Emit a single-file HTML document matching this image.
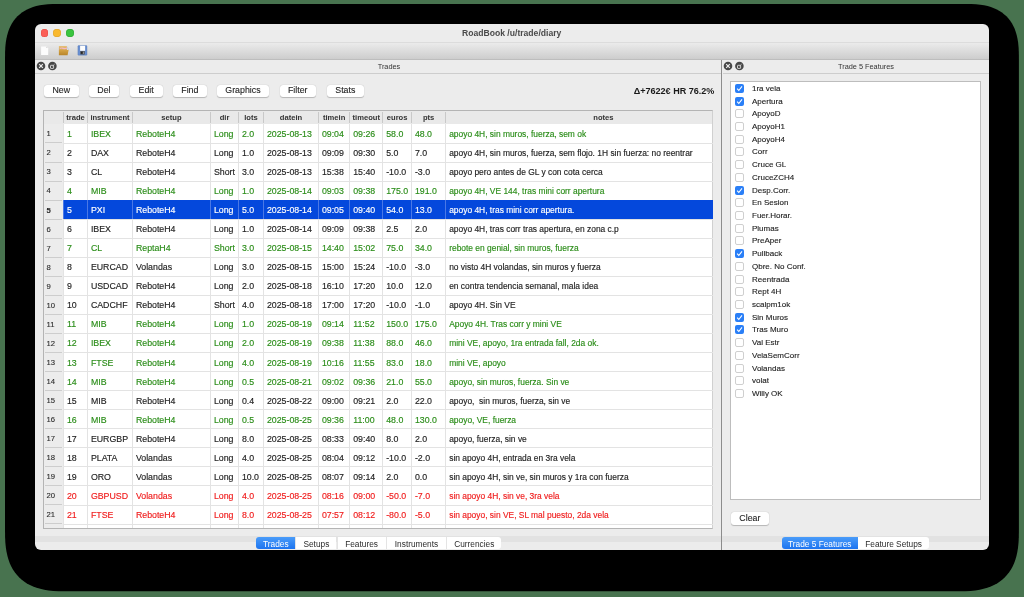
<!DOCTYPE html><html><head><meta charset="utf-8"><style>
*{margin:0;padding:0;box-sizing:border-box}
html,body{width:1024px;height:597px;overflow:hidden;background:#48734f;font-family:"Liberation Sans",sans-serif;}
.a{position:absolute}
#shadow{left:5px;top:4px;width:1014px;height:588.5px;background:#000;border-radius:40px}
#win{left:35px;top:24px;width:954px;height:525.7px;background:#ececec;border-radius:6px;overflow:hidden}
.t{position:absolute;white-space:nowrap;line-height:1}
.cell{font-size:8.8px;-webkit-text-stroke:0.15px currentColor}
.nt{font-size:8.42px}
.hd{font-size:7.6px;font-weight:bold;color:#333}
.vl{position:absolute;width:1px}
.btn{position:absolute;background:#fff;border-radius:3px;box-shadow:0 0.6px 0.9px rgba(0,0,0,.22),0 0 0 0.3px rgba(0,0,0,.06);font-size:8.8px;color:#222;text-align:center;line-height:11.9px;height:12.2px;-webkit-text-stroke:0.1px currentColor}
.cb{position:absolute;width:9px;height:9px;border-radius:2px}
.cb0{background:#fff;border:0.7px solid #cfcfcf}
.cb1{background:#2a7ff7}
.ft{font-size:8px;color:#222;-webkit-text-stroke:0.12px currentColor}
.tab{position:absolute;height:12.5px;line-height:14.4px;font-size:8.3px;text-align:center;color:#2a2a2a;background:#fff}
</style></head><body><div style="position:absolute;left:0;top:0;width:1024px;height:597px;will-change:transform">
<svg class="a" style="left:0;top:0" width="1024" height="597"><path d="M5.00 58.90 L5.09 51.60 L5.35 46.73 L5.78 42.51 L6.39 38.69 L7.18 35.17 L8.13 31.90 L9.26 28.84 L10.56 25.99 L12.03 23.31 L13.67 20.82 L15.48 18.50 L17.45 16.35 L19.60 14.38 L21.92 12.57 L24.41 10.93 L27.09 9.46 L29.94 8.16 L33.00 7.03 L36.27 6.08 L39.79 5.29 L43.61 4.68 L47.83 4.25 L52.70 3.99 L60.00 3.90 L963.90 3.90 L971.20 3.99 L976.07 4.25 L980.29 4.68 L984.11 5.29 L987.63 6.08 L990.90 7.03 L993.96 8.16 L996.81 9.46 L999.49 10.93 L1001.98 12.57 L1004.30 14.38 L1006.45 16.35 L1008.42 18.50 L1010.23 20.82 L1011.87 23.31 L1013.34 25.99 L1014.64 28.84 L1015.77 31.90 L1016.72 35.17 L1017.51 38.69 L1018.12 42.51 L1018.55 46.73 L1018.81 51.60 L1018.90 58.90 L1018.90 529.30 L1018.80 537.52 L1018.51 543.02 L1018.02 547.78 L1017.33 552.08 L1016.45 556.05 L1015.37 559.74 L1014.10 563.18 L1012.63 566.40 L1010.98 569.42 L1009.13 572.23 L1007.09 574.84 L1004.86 577.26 L1002.44 579.49 L999.83 581.53 L997.02 583.38 L994.00 585.03 L990.78 586.50 L987.34 587.77 L983.65 588.85 L979.68 589.73 L975.38 590.42 L970.62 590.91 L965.12 591.20 L956.90 591.30 L67.00 591.30 L58.78 591.20 L53.28 590.91 L48.52 590.42 L44.22 589.73 L40.25 588.85 L36.56 587.77 L33.12 586.50 L29.90 585.03 L26.88 583.38 L24.07 581.53 L21.46 579.49 L19.04 577.26 L16.81 574.84 L14.77 572.23 L12.92 569.42 L11.27 566.40 L9.80 563.18 L8.53 559.74 L7.45 556.05 L6.57 552.08 L5.88 547.78 L5.39 543.02 L5.10 537.52 L5.00 529.30 Z" fill="#000"/></svg>

<div id="win" class="a"></div>
<div class="a" style="left:35px;top:42px;width:954px;height:0.6px;background:#dcdcdc"></div>
<div class="a" style="left:40.5px;top:29.0px;width:7.8px;height:7.8px;border-radius:50%;background:#fb5f57;box-shadow:inset 0 0 0 0.4px #e2463f"></div>
<div class="a" style="left:53.2px;top:29.0px;width:7.8px;height:7.8px;border-radius:50%;background:#f9b92e;box-shadow:inset 0 0 0 0.4px #d9a02a"></div>
<div class="a" style="left:66.0px;top:29.0px;width:7.8px;height:7.8px;border-radius:50%;background:#3ac43f;box-shadow:inset 0 0 0 0.4px #2aa42f"></div>
<div class="t" style="left:462px;top:28.5px;width:99px;text-align:center;font-size:8.6px;font-weight:bold;color:#4a4a4a">RoadBook /u/trade/diary</div>
<div class="a" style="left:35px;top:42.6px;width:954px;height:17px;background:linear-gradient(#ebebeb,#cbcbcb)"></div>
<div class="a" style="left:35px;top:59.4px;width:954px;height:0.6px;background:#bdbdbd"></div>
<svg class="a" style="left:40px;top:45px" width="50" height="12" viewBox="0 0 50 12">
<defs><linearGradient id="fb" x1="0" y1="0" x2="0" y2="1"><stop offset="0" stop-color="#e6c07a"/><stop offset="1" stop-color="#d1a552"/></linearGradient>
<linearGradient id="ff" x1="0" y1="0" x2="0" y2="1"><stop offset="0" stop-color="#d6a445"/><stop offset="1" stop-color="#b8852a"/></linearGradient></defs>
<path d="M1.1 1.4 H6.2 L8.2 3.4 V10.1 H1.1 Z" fill="#fcfcfc"/>
<circle cx="6.6" cy="2.6" r="0.5" fill="#d4d4d4"/>
<path d="M18.9 1.0 H26.9 V5.4 H18.9 Z" fill="url(#fb)"/>
<path d="M19.8 3.0 Q22 2.1 23.5 2.8 T27 2.4 V3.8 Q25 4.6 23 3.9 T19.8 4.2 Z" fill="#f2b7c4"/>
<path d="M18.9 5.0 H28.6 L27.6 10.2 H18.9 Z" fill="url(#ff)"/>
<path d="M27.2 1.6 L28.6 5.0" stroke="#9fb4d4" stroke-width="0.4"/>
<rect x="37.9" y="0.6" width="9.1" height="9.6" rx="0.6" fill="#6a8fd0"/>
<rect x="37.9" y="0.6" width="9.1" height="9.6" rx="0.6" fill="none" stroke="#4f73b4" stroke-width="0.35"/>
<rect x="40.1" y="0.8" width="5" height="5" fill="#fdfdfd"/>
<rect x="40.3" y="6.1" width="4.4" height="3.4" fill="#4a4a4a"/>
<circle cx="41.8" cy="7.8" r="0.9" fill="#1e1e1e"/>
<rect x="42.9" y="6.6" width="1.2" height="2.4" fill="#8a8a8a"/>
</svg>
<div class="a" style="left:35px;top:73px;width:686.5px;height:0.7px;background:#cdcdcd"></div>
<div class="a" style="left:722.5px;top:73px;width:266.5px;height:0.7px;background:#cdcdcd"></div>
<div class="a" style="left:721.1px;top:59.6px;width:1px;height:490px;background:#8c8c8c"></div>
<svg class="a" style="left:36.3px;top:61.099999999999994px" width="25" height="10" viewBox="0 0 25 10">
<circle cx="5" cy="5" r="4.3" fill="#474747"/>
<path d="M3.2 3.2 L6.8 6.8 M6.8 3.2 L3.2 6.8" stroke="#ededed" stroke-width="1.2"/>
<circle cx="16.4" cy="5" r="4.3" fill="#474747"/>
<rect x="14.5" y="4.3" width="3.1" height="3.1" rx="0.4" fill="none" stroke="#e4e4e4" stroke-width="0.85"/>
<path d="M16.6 5.1 L18.6 3.2" stroke="#e4e4e4" stroke-width="0.7"/>
</svg>
<svg class="a" style="left:722.9px;top:61.099999999999994px" width="25" height="10" viewBox="0 0 25 10">
<circle cx="5" cy="5" r="4.3" fill="#474747"/>
<path d="M3.2 3.2 L6.8 6.8 M6.8 3.2 L3.2 6.8" stroke="#ededed" stroke-width="1.2"/>
<circle cx="16.4" cy="5" r="4.3" fill="#474747"/>
<rect x="14.5" y="4.3" width="3.1" height="3.1" rx="0.4" fill="none" stroke="#e4e4e4" stroke-width="0.85"/>
<path d="M16.6 5.1 L18.6 3.2" stroke="#e4e4e4" stroke-width="0.7"/>
</svg>
<div class="t" style="left:359px;top:63.0px;width:60px;text-align:center;font-size:7.35px;color:#333">Trades</div>
<div class="t" style="left:826px;top:63.0px;width:80px;text-align:center;font-size:7.35px;color:#333">Trade 5 Features</div>
<div class="btn" style="left:43.8px;top:84.8px;width:34.8px">New</div>
<div class="btn" style="left:88.7px;top:84.8px;width:30.5px">Del</div>
<div class="btn" style="left:129.8px;top:84.8px;width:32.79999999999998px">Edit</div>
<div class="btn" style="left:172.7px;top:84.8px;width:34.30000000000001px">Find</div>
<div class="btn" style="left:217px;top:84.8px;width:51.89999999999998px">Graphics</div>
<div class="btn" style="left:279.6px;top:84.8px;width:36.39999999999998px">Filter</div>
<div class="btn" style="left:326.6px;top:84.8px;width:37.39999999999998px">Stats</div>
<div class="t" style="left:601.6px;top:86.8px;width:112.8px;text-align:right;font-size:9.05px;font-weight:bold;color:#1a1a1a">&Delta;+7622&euro; HR 76.2%</div>
<div class="a" style="left:43px;top:110.2px;width:670.3px;height:418.6px;background:#fff;border:0.8px solid #b4b4b4;border-right-color:#d0d0d0"></div>
<div class="a" style="left:43.8px;top:111px;width:668.7px;height:13.400000000000006px;background:#e9e9e9"></div>
<div class="a" style="left:43.8px;top:123.9px;width:19.700000000000003px;height:404.1px;background:#ececec"></div>
<div class="vl" style="left:63.0px;top:112.2px;height:10.6px;background:#c9c9c9"></div>
<div class="vl" style="left:63.0px;top:123.9px;height:404.1px;background:#e3e3e3"></div>
<div class="vl" style="left:87.0px;top:112.2px;height:10.6px;background:#c9c9c9"></div>
<div class="vl" style="left:87.0px;top:123.9px;height:404.1px;background:#e3e3e3"></div>
<div class="vl" style="left:132.0px;top:112.2px;height:10.6px;background:#c9c9c9"></div>
<div class="vl" style="left:132.0px;top:123.9px;height:404.1px;background:#e3e3e3"></div>
<div class="vl" style="left:210.0px;top:112.2px;height:10.6px;background:#c9c9c9"></div>
<div class="vl" style="left:210.0px;top:123.9px;height:404.1px;background:#e3e3e3"></div>
<div class="vl" style="left:238.0px;top:112.2px;height:10.6px;background:#c9c9c9"></div>
<div class="vl" style="left:238.0px;top:123.9px;height:404.1px;background:#e3e3e3"></div>
<div class="vl" style="left:263.0px;top:112.2px;height:10.6px;background:#c9c9c9"></div>
<div class="vl" style="left:263.0px;top:123.9px;height:404.1px;background:#e3e3e3"></div>
<div class="vl" style="left:318.0px;top:112.2px;height:10.6px;background:#c9c9c9"></div>
<div class="vl" style="left:318.0px;top:123.9px;height:404.1px;background:#e3e3e3"></div>
<div class="vl" style="left:349.3px;top:112.2px;height:10.6px;background:#c9c9c9"></div>
<div class="vl" style="left:349.3px;top:123.9px;height:404.1px;background:#e3e3e3"></div>
<div class="vl" style="left:382.3px;top:112.2px;height:10.6px;background:#c9c9c9"></div>
<div class="vl" style="left:382.3px;top:123.9px;height:404.1px;background:#e3e3e3"></div>
<div class="vl" style="left:411.0px;top:112.2px;height:10.6px;background:#c9c9c9"></div>
<div class="vl" style="left:411.0px;top:123.9px;height:404.1px;background:#e3e3e3"></div>
<div class="vl" style="left:445.3px;top:112.2px;height:10.6px;background:#c9c9c9"></div>
<div class="vl" style="left:445.3px;top:123.9px;height:404.1px;background:#e3e3e3"></div>
<div class="vl" style="left:63px;top:112.2px;height:10.6px;background:#c9c9c9"></div>
<div class="t hd" style="left:63.5px;top:113.6px;width:24.0px;text-align:center">trade</div>
<div class="t hd" style="left:87.5px;top:113.6px;width:45.0px;text-align:center">instrument</div>
<div class="t hd" style="left:132.5px;top:113.6px;width:78.0px;text-align:center">setup</div>
<div class="t hd" style="left:210.5px;top:113.6px;width:28.0px;text-align:center">dir</div>
<div class="t hd" style="left:238.5px;top:113.6px;width:25.0px;text-align:center">lots</div>
<div class="t hd" style="left:263.5px;top:113.6px;width:55.0px;text-align:center">datein</div>
<div class="t hd" style="left:318.5px;top:113.6px;width:31.30000000000001px;text-align:center">timein</div>
<div class="t hd" style="left:349.8px;top:113.6px;width:33.0px;text-align:center">timeout</div>
<div class="t hd" style="left:382.8px;top:113.6px;width:28.69999999999999px;text-align:center">euros</div>
<div class="t hd" style="left:411.5px;top:113.6px;width:34.30000000000001px;text-align:center">pts</div>
<div class="t hd" style="left:445.8px;top:113.6px;width:315.2px;text-align:center">notes</div>
<div class="a" style="left:63.5px;top:142.55px;width:649px;height:0.8px;background:#e3e3e3"></div>
<div class="a" style="left:45.2px;top:142.45000000000002px;width:17px;height:0.9px;background:#cdcdcd"></div>
<div class="t" style="left:46.6px;top:130.3px;font-size:7.7px;-webkit-text-stroke:0.1px currentColor;color:#2a2a2a;font-weight:normal">1</div>
<div class="t cell" style="left:66.9px;top:129.9px;color:#2b8d19">1</div>
<div class="t cell" style="left:90.9px;top:129.9px;color:#2b8d19">IBEX</div>
<div class="t cell" style="left:135.9px;top:129.9px;color:#2b8d19">ReboteH4</div>
<div class="t cell" style="left:213.9px;top:129.9px;color:#2b8d19">Long</div>
<div class="t cell" style="left:241.9px;top:129.9px;color:#2b8d19">2.0</div>
<div class="t cell" style="left:266.9px;top:129.9px;color:#2b8d19">2025-08-13</div>
<div class="t cell" style="left:321.9px;top:129.9px;color:#2b8d19">09:04</div>
<div class="t cell" style="left:353.2px;top:129.9px;color:#2b8d19">09:26</div>
<div class="t cell" style="left:386.2px;top:129.9px;color:#2b8d19">58.0</div>
<div class="t cell" style="left:414.9px;top:129.9px;color:#2b8d19">48.0</div>
<div class="t cell nt" style="left:449.2px;top:129.9px;color:#2b8d19">apoyo 4H, sin muros, fuerza, sem ok</div>
<div class="a" style="left:63.5px;top:161.60000000000002px;width:649px;height:0.8px;background:#e3e3e3"></div>
<div class="a" style="left:45.2px;top:161.50000000000003px;width:17px;height:0.9px;background:#cdcdcd"></div>
<div class="t" style="left:46.6px;top:149.35000000000002px;font-size:7.7px;-webkit-text-stroke:0.1px currentColor;color:#2a2a2a;font-weight:normal">2</div>
<div class="t cell" style="left:66.9px;top:148.95000000000002px;color:#1e1e1e">2</div>
<div class="t cell" style="left:90.9px;top:148.95000000000002px;color:#1e1e1e">DAX</div>
<div class="t cell" style="left:135.9px;top:148.95000000000002px;color:#1e1e1e">ReboteH4</div>
<div class="t cell" style="left:213.9px;top:148.95000000000002px;color:#1e1e1e">Long</div>
<div class="t cell" style="left:241.9px;top:148.95000000000002px;color:#1e1e1e">1.0</div>
<div class="t cell" style="left:266.9px;top:148.95000000000002px;color:#1e1e1e">2025-08-13</div>
<div class="t cell" style="left:321.9px;top:148.95000000000002px;color:#1e1e1e">09:09</div>
<div class="t cell" style="left:353.2px;top:148.95000000000002px;color:#1e1e1e">09:30</div>
<div class="t cell" style="left:386.2px;top:148.95000000000002px;color:#1e1e1e">5.0</div>
<div class="t cell" style="left:414.9px;top:148.95000000000002px;color:#1e1e1e">7.0</div>
<div class="t cell nt" style="left:449.2px;top:148.95000000000002px;color:#1e1e1e">apoyo 4H, sin muros, fuerza, sem flojo. 1H sin fuerza: no reentrar</div>
<div class="a" style="left:63.5px;top:180.65px;width:649px;height:0.8px;background:#e3e3e3"></div>
<div class="a" style="left:45.2px;top:180.55px;width:17px;height:0.9px;background:#cdcdcd"></div>
<div class="t" style="left:46.6px;top:168.4px;font-size:7.7px;-webkit-text-stroke:0.1px currentColor;color:#2a2a2a;font-weight:normal">3</div>
<div class="t cell" style="left:66.9px;top:168.0px;color:#1e1e1e">3</div>
<div class="t cell" style="left:90.9px;top:168.0px;color:#1e1e1e">CL</div>
<div class="t cell" style="left:135.9px;top:168.0px;color:#1e1e1e">ReboteH4</div>
<div class="t cell" style="left:213.9px;top:168.0px;color:#1e1e1e">Short</div>
<div class="t cell" style="left:241.9px;top:168.0px;color:#1e1e1e">3.0</div>
<div class="t cell" style="left:266.9px;top:168.0px;color:#1e1e1e">2025-08-13</div>
<div class="t cell" style="left:321.9px;top:168.0px;color:#1e1e1e">15:38</div>
<div class="t cell" style="left:353.2px;top:168.0px;color:#1e1e1e">15:40</div>
<div class="t cell" style="left:386.2px;top:168.0px;color:#1e1e1e">-10.0</div>
<div class="t cell" style="left:414.9px;top:168.0px;color:#1e1e1e">-3.0</div>
<div class="t cell nt" style="left:449.2px;top:168.0px;color:#1e1e1e">apoyo pero antes de GL y con cota cerca</div>
<div class="a" style="left:63.5px;top:199.70000000000002px;width:649px;height:0.8px;background:#e3e3e3"></div>
<div class="a" style="left:45.2px;top:199.60000000000002px;width:17px;height:0.9px;background:#cdcdcd"></div>
<div class="t" style="left:46.6px;top:187.45000000000002px;font-size:7.7px;-webkit-text-stroke:0.1px currentColor;color:#2a2a2a;font-weight:normal">4</div>
<div class="t cell" style="left:66.9px;top:187.05px;color:#2b8d19">4</div>
<div class="t cell" style="left:90.9px;top:187.05px;color:#2b8d19">MIB</div>
<div class="t cell" style="left:135.9px;top:187.05px;color:#2b8d19">ReboteH4</div>
<div class="t cell" style="left:213.9px;top:187.05px;color:#2b8d19">Long</div>
<div class="t cell" style="left:241.9px;top:187.05px;color:#2b8d19">1.0</div>
<div class="t cell" style="left:266.9px;top:187.05px;color:#2b8d19">2025-08-14</div>
<div class="t cell" style="left:321.9px;top:187.05px;color:#2b8d19">09:03</div>
<div class="t cell" style="left:353.2px;top:187.05px;color:#2b8d19">09:38</div>
<div class="t cell" style="left:386.2px;top:187.05px;color:#2b8d19">175.0</div>
<div class="t cell" style="left:414.9px;top:187.05px;color:#2b8d19">191.0</div>
<div class="t cell nt" style="left:449.2px;top:187.05px;color:#2b8d19">apoyo 4H, VE 144, tras mini corr apertura</div>
<div class="a" style="left:63.5px;top:200.10000000000002px;width:649px;height:19.05px;background:#0448dc"></div>
<div class="vl" style="left:63.0px;top:200.10000000000002px;height:19.05px;background:#4a78e6"></div>
<div class="vl" style="left:87.0px;top:200.10000000000002px;height:19.05px;background:#4a78e6"></div>
<div class="vl" style="left:132.0px;top:200.10000000000002px;height:19.05px;background:#4a78e6"></div>
<div class="vl" style="left:210.0px;top:200.10000000000002px;height:19.05px;background:#4a78e6"></div>
<div class="vl" style="left:238.0px;top:200.10000000000002px;height:19.05px;background:#4a78e6"></div>
<div class="vl" style="left:263.0px;top:200.10000000000002px;height:19.05px;background:#4a78e6"></div>
<div class="vl" style="left:318.0px;top:200.10000000000002px;height:19.05px;background:#4a78e6"></div>
<div class="vl" style="left:349.3px;top:200.10000000000002px;height:19.05px;background:#4a78e6"></div>
<div class="vl" style="left:382.3px;top:200.10000000000002px;height:19.05px;background:#4a78e6"></div>
<div class="vl" style="left:411.0px;top:200.10000000000002px;height:19.05px;background:#4a78e6"></div>
<div class="vl" style="left:445.3px;top:200.10000000000002px;height:19.05px;background:#4a78e6"></div>
<div class="a" style="left:63.5px;top:218.75000000000003px;width:649px;height:0.8px;background:#e3e3e3"></div>
<div class="a" style="left:45.2px;top:218.65000000000003px;width:17px;height:0.9px;background:#cdcdcd"></div>
<div class="t" style="left:46.6px;top:206.50000000000003px;font-size:7.7px;-webkit-text-stroke:0.1px currentColor;color:#2a2a2a;font-weight:bold">5</div>
<div class="t cell" style="left:66.9px;top:206.10000000000002px;color:#fff">5</div>
<div class="t cell" style="left:90.9px;top:206.10000000000002px;color:#fff">PXI</div>
<div class="t cell" style="left:135.9px;top:206.10000000000002px;color:#fff">ReboteH4</div>
<div class="t cell" style="left:213.9px;top:206.10000000000002px;color:#fff">Long</div>
<div class="t cell" style="left:241.9px;top:206.10000000000002px;color:#fff">5.0</div>
<div class="t cell" style="left:266.9px;top:206.10000000000002px;color:#fff">2025-08-14</div>
<div class="t cell" style="left:321.9px;top:206.10000000000002px;color:#fff">09:05</div>
<div class="t cell" style="left:353.2px;top:206.10000000000002px;color:#fff">09:40</div>
<div class="t cell" style="left:386.2px;top:206.10000000000002px;color:#fff">54.0</div>
<div class="t cell" style="left:414.9px;top:206.10000000000002px;color:#fff">13.0</div>
<div class="t cell nt" style="left:449.2px;top:206.10000000000002px;color:#fff">apoyo 4H, tras mini corr apertura.</div>
<div class="a" style="left:63.5px;top:237.8px;width:649px;height:0.8px;background:#e3e3e3"></div>
<div class="a" style="left:45.2px;top:237.70000000000002px;width:17px;height:0.9px;background:#cdcdcd"></div>
<div class="t" style="left:46.6px;top:225.55px;font-size:7.7px;-webkit-text-stroke:0.1px currentColor;color:#2a2a2a;font-weight:normal">6</div>
<div class="t cell" style="left:66.9px;top:225.15px;color:#1e1e1e">6</div>
<div class="t cell" style="left:90.9px;top:225.15px;color:#1e1e1e">IBEX</div>
<div class="t cell" style="left:135.9px;top:225.15px;color:#1e1e1e">ReboteH4</div>
<div class="t cell" style="left:213.9px;top:225.15px;color:#1e1e1e">Long</div>
<div class="t cell" style="left:241.9px;top:225.15px;color:#1e1e1e">1.0</div>
<div class="t cell" style="left:266.9px;top:225.15px;color:#1e1e1e">2025-08-14</div>
<div class="t cell" style="left:321.9px;top:225.15px;color:#1e1e1e">09:09</div>
<div class="t cell" style="left:353.2px;top:225.15px;color:#1e1e1e">09:38</div>
<div class="t cell" style="left:386.2px;top:225.15px;color:#1e1e1e">2.5</div>
<div class="t cell" style="left:414.9px;top:225.15px;color:#1e1e1e">2.0</div>
<div class="t cell nt" style="left:449.2px;top:225.15px;color:#1e1e1e">apoyo 4H, tras corr tras apertura, en zona c.p</div>
<div class="a" style="left:63.5px;top:256.85px;width:649px;height:0.8px;background:#e3e3e3"></div>
<div class="a" style="left:45.2px;top:256.75px;width:17px;height:0.9px;background:#cdcdcd"></div>
<div class="t" style="left:46.6px;top:244.60000000000002px;font-size:7.7px;-webkit-text-stroke:0.1px currentColor;color:#2a2a2a;font-weight:normal">7</div>
<div class="t cell" style="left:66.9px;top:244.20000000000002px;color:#2b8d19">7</div>
<div class="t cell" style="left:90.9px;top:244.20000000000002px;color:#2b8d19">CL</div>
<div class="t cell" style="left:135.9px;top:244.20000000000002px;color:#2b8d19">ReptaH4</div>
<div class="t cell" style="left:213.9px;top:244.20000000000002px;color:#2b8d19">Short</div>
<div class="t cell" style="left:241.9px;top:244.20000000000002px;color:#2b8d19">3.0</div>
<div class="t cell" style="left:266.9px;top:244.20000000000002px;color:#2b8d19">2025-08-15</div>
<div class="t cell" style="left:321.9px;top:244.20000000000002px;color:#2b8d19">14:40</div>
<div class="t cell" style="left:353.2px;top:244.20000000000002px;color:#2b8d19">15:02</div>
<div class="t cell" style="left:386.2px;top:244.20000000000002px;color:#2b8d19">75.0</div>
<div class="t cell" style="left:414.9px;top:244.20000000000002px;color:#2b8d19">34.0</div>
<div class="t cell nt" style="left:449.2px;top:244.20000000000002px;color:#2b8d19">rebote en genial, sin muros, fuerza</div>
<div class="a" style="left:63.5px;top:275.90000000000003px;width:649px;height:0.8px;background:#e3e3e3"></div>
<div class="a" style="left:45.2px;top:275.8px;width:17px;height:0.9px;background:#cdcdcd"></div>
<div class="t" style="left:46.6px;top:263.65px;font-size:7.7px;-webkit-text-stroke:0.1px currentColor;color:#2a2a2a;font-weight:normal">8</div>
<div class="t cell" style="left:66.9px;top:263.25px;color:#1e1e1e">8</div>
<div class="t cell" style="left:90.9px;top:263.25px;color:#1e1e1e">EURCAD</div>
<div class="t cell" style="left:135.9px;top:263.25px;color:#1e1e1e">Volandas</div>
<div class="t cell" style="left:213.9px;top:263.25px;color:#1e1e1e">Long</div>
<div class="t cell" style="left:241.9px;top:263.25px;color:#1e1e1e">3.0</div>
<div class="t cell" style="left:266.9px;top:263.25px;color:#1e1e1e">2025-08-15</div>
<div class="t cell" style="left:321.9px;top:263.25px;color:#1e1e1e">15:00</div>
<div class="t cell" style="left:353.2px;top:263.25px;color:#1e1e1e">15:24</div>
<div class="t cell" style="left:386.2px;top:263.25px;color:#1e1e1e">-10.0</div>
<div class="t cell" style="left:414.9px;top:263.25px;color:#1e1e1e">-3.0</div>
<div class="t cell nt" style="left:449.2px;top:263.25px;color:#1e1e1e">no visto 4H volandas, sin muros y fuerza</div>
<div class="a" style="left:63.5px;top:294.95000000000005px;width:649px;height:0.8px;background:#e3e3e3"></div>
<div class="a" style="left:45.2px;top:294.85px;width:17px;height:0.9px;background:#cdcdcd"></div>
<div class="t" style="left:46.6px;top:282.7px;font-size:7.7px;-webkit-text-stroke:0.1px currentColor;color:#2a2a2a;font-weight:normal">9</div>
<div class="t cell" style="left:66.9px;top:282.3px;color:#1e1e1e">9</div>
<div class="t cell" style="left:90.9px;top:282.3px;color:#1e1e1e">USDCAD</div>
<div class="t cell" style="left:135.9px;top:282.3px;color:#1e1e1e">ReboteH4</div>
<div class="t cell" style="left:213.9px;top:282.3px;color:#1e1e1e">Long</div>
<div class="t cell" style="left:241.9px;top:282.3px;color:#1e1e1e">2.0</div>
<div class="t cell" style="left:266.9px;top:282.3px;color:#1e1e1e">2025-08-18</div>
<div class="t cell" style="left:321.9px;top:282.3px;color:#1e1e1e">16:10</div>
<div class="t cell" style="left:353.2px;top:282.3px;color:#1e1e1e">17:20</div>
<div class="t cell" style="left:386.2px;top:282.3px;color:#1e1e1e">10.0</div>
<div class="t cell" style="left:414.9px;top:282.3px;color:#1e1e1e">12.0</div>
<div class="t cell nt" style="left:449.2px;top:282.3px;color:#1e1e1e">en contra tendencia semanal, mala idea</div>
<div class="a" style="left:63.5px;top:314.00000000000006px;width:649px;height:0.8px;background:#e3e3e3"></div>
<div class="a" style="left:45.2px;top:313.90000000000003px;width:17px;height:0.9px;background:#cdcdcd"></div>
<div class="t" style="left:46.6px;top:301.75px;font-size:7.7px;-webkit-text-stroke:0.1px currentColor;color:#2a2a2a;font-weight:normal">10</div>
<div class="t cell" style="left:66.9px;top:301.35px;color:#1e1e1e">10</div>
<div class="t cell" style="left:90.9px;top:301.35px;color:#1e1e1e">CADCHF</div>
<div class="t cell" style="left:135.9px;top:301.35px;color:#1e1e1e">ReboteH4</div>
<div class="t cell" style="left:213.9px;top:301.35px;color:#1e1e1e">Short</div>
<div class="t cell" style="left:241.9px;top:301.35px;color:#1e1e1e">4.0</div>
<div class="t cell" style="left:266.9px;top:301.35px;color:#1e1e1e">2025-08-18</div>
<div class="t cell" style="left:321.9px;top:301.35px;color:#1e1e1e">17:00</div>
<div class="t cell" style="left:353.2px;top:301.35px;color:#1e1e1e">17:20</div>
<div class="t cell" style="left:386.2px;top:301.35px;color:#1e1e1e">-10.0</div>
<div class="t cell" style="left:414.9px;top:301.35px;color:#1e1e1e">-1.0</div>
<div class="t cell nt" style="left:449.2px;top:301.35px;color:#1e1e1e">apoyo 4H. Sin VE</div>
<div class="a" style="left:63.5px;top:333.05px;width:649px;height:0.8px;background:#e3e3e3"></div>
<div class="a" style="left:45.2px;top:332.95px;width:17px;height:0.9px;background:#cdcdcd"></div>
<div class="t" style="left:46.6px;top:320.79999999999995px;font-size:7.7px;-webkit-text-stroke:0.1px currentColor;color:#2a2a2a;font-weight:normal">11</div>
<div class="t cell" style="left:66.9px;top:320.4px;color:#2b8d19">11</div>
<div class="t cell" style="left:90.9px;top:320.4px;color:#2b8d19">MIB</div>
<div class="t cell" style="left:135.9px;top:320.4px;color:#2b8d19">ReboteH4</div>
<div class="t cell" style="left:213.9px;top:320.4px;color:#2b8d19">Long</div>
<div class="t cell" style="left:241.9px;top:320.4px;color:#2b8d19">1.0</div>
<div class="t cell" style="left:266.9px;top:320.4px;color:#2b8d19">2025-08-19</div>
<div class="t cell" style="left:321.9px;top:320.4px;color:#2b8d19">09:14</div>
<div class="t cell" style="left:353.2px;top:320.4px;color:#2b8d19">11:52</div>
<div class="t cell" style="left:386.2px;top:320.4px;color:#2b8d19">150.0</div>
<div class="t cell" style="left:414.9px;top:320.4px;color:#2b8d19">175.0</div>
<div class="t cell nt" style="left:449.2px;top:320.4px;color:#2b8d19">Apoyo 4H. Tras corr y mini VE</div>
<div class="a" style="left:63.5px;top:352.1000000000001px;width:649px;height:0.8px;background:#e3e3e3"></div>
<div class="a" style="left:45.2px;top:352.00000000000006px;width:17px;height:0.9px;background:#cdcdcd"></div>
<div class="t" style="left:46.6px;top:339.85px;font-size:7.7px;-webkit-text-stroke:0.1px currentColor;color:#2a2a2a;font-weight:normal">12</div>
<div class="t cell" style="left:66.9px;top:339.45000000000005px;color:#2b8d19">12</div>
<div class="t cell" style="left:90.9px;top:339.45000000000005px;color:#2b8d19">IBEX</div>
<div class="t cell" style="left:135.9px;top:339.45000000000005px;color:#2b8d19">ReboteH4</div>
<div class="t cell" style="left:213.9px;top:339.45000000000005px;color:#2b8d19">Long</div>
<div class="t cell" style="left:241.9px;top:339.45000000000005px;color:#2b8d19">2.0</div>
<div class="t cell" style="left:266.9px;top:339.45000000000005px;color:#2b8d19">2025-08-19</div>
<div class="t cell" style="left:321.9px;top:339.45000000000005px;color:#2b8d19">09:38</div>
<div class="t cell" style="left:353.2px;top:339.45000000000005px;color:#2b8d19">11:38</div>
<div class="t cell" style="left:386.2px;top:339.45000000000005px;color:#2b8d19">88.0</div>
<div class="t cell" style="left:414.9px;top:339.45000000000005px;color:#2b8d19">46.0</div>
<div class="t cell nt" style="left:449.2px;top:339.45000000000005px;color:#2b8d19">mini VE, apoyo, 1ra entrada fall, 2da ok.</div>
<div class="a" style="left:63.5px;top:371.15000000000003px;width:649px;height:0.8px;background:#e3e3e3"></div>
<div class="a" style="left:45.2px;top:371.05px;width:17px;height:0.9px;background:#cdcdcd"></div>
<div class="t" style="left:46.6px;top:358.9px;font-size:7.7px;-webkit-text-stroke:0.1px currentColor;color:#2a2a2a;font-weight:normal">13</div>
<div class="t cell" style="left:66.9px;top:358.5px;color:#2b8d19">13</div>
<div class="t cell" style="left:90.9px;top:358.5px;color:#2b8d19">FTSE</div>
<div class="t cell" style="left:135.9px;top:358.5px;color:#2b8d19">ReboteH4</div>
<div class="t cell" style="left:213.9px;top:358.5px;color:#2b8d19">Long</div>
<div class="t cell" style="left:241.9px;top:358.5px;color:#2b8d19">4.0</div>
<div class="t cell" style="left:266.9px;top:358.5px;color:#2b8d19">2025-08-19</div>
<div class="t cell" style="left:321.9px;top:358.5px;color:#2b8d19">10:16</div>
<div class="t cell" style="left:353.2px;top:358.5px;color:#2b8d19">11:55</div>
<div class="t cell" style="left:386.2px;top:358.5px;color:#2b8d19">83.0</div>
<div class="t cell" style="left:414.9px;top:358.5px;color:#2b8d19">18.0</div>
<div class="t cell nt" style="left:449.2px;top:358.5px;color:#2b8d19">mini VE, apoyo</div>
<div class="a" style="left:63.5px;top:390.20000000000005px;width:649px;height:0.8px;background:#e3e3e3"></div>
<div class="a" style="left:45.2px;top:390.1px;width:17px;height:0.9px;background:#cdcdcd"></div>
<div class="t" style="left:46.6px;top:377.95px;font-size:7.7px;-webkit-text-stroke:0.1px currentColor;color:#2a2a2a;font-weight:normal">14</div>
<div class="t cell" style="left:66.9px;top:377.55px;color:#2b8d19">14</div>
<div class="t cell" style="left:90.9px;top:377.55px;color:#2b8d19">MIB</div>
<div class="t cell" style="left:135.9px;top:377.55px;color:#2b8d19">ReboteH4</div>
<div class="t cell" style="left:213.9px;top:377.55px;color:#2b8d19">Long</div>
<div class="t cell" style="left:241.9px;top:377.55px;color:#2b8d19">0.5</div>
<div class="t cell" style="left:266.9px;top:377.55px;color:#2b8d19">2025-08-21</div>
<div class="t cell" style="left:321.9px;top:377.55px;color:#2b8d19">09:02</div>
<div class="t cell" style="left:353.2px;top:377.55px;color:#2b8d19">09:36</div>
<div class="t cell" style="left:386.2px;top:377.55px;color:#2b8d19">21.0</div>
<div class="t cell" style="left:414.9px;top:377.55px;color:#2b8d19">55.0</div>
<div class="t cell nt" style="left:449.2px;top:377.55px;color:#2b8d19">apoyo, sin muros, fuerza. Sin ve</div>
<div class="a" style="left:63.5px;top:409.25000000000006px;width:649px;height:0.8px;background:#e3e3e3"></div>
<div class="a" style="left:45.2px;top:409.15000000000003px;width:17px;height:0.9px;background:#cdcdcd"></div>
<div class="t" style="left:46.6px;top:397.0px;font-size:7.7px;-webkit-text-stroke:0.1px currentColor;color:#2a2a2a;font-weight:normal">15</div>
<div class="t cell" style="left:66.9px;top:396.6px;color:#1e1e1e">15</div>
<div class="t cell" style="left:90.9px;top:396.6px;color:#1e1e1e">MIB</div>
<div class="t cell" style="left:135.9px;top:396.6px;color:#1e1e1e">ReboteH4</div>
<div class="t cell" style="left:213.9px;top:396.6px;color:#1e1e1e">Long</div>
<div class="t cell" style="left:241.9px;top:396.6px;color:#1e1e1e">0.4</div>
<div class="t cell" style="left:266.9px;top:396.6px;color:#1e1e1e">2025-08-22</div>
<div class="t cell" style="left:321.9px;top:396.6px;color:#1e1e1e">09:00</div>
<div class="t cell" style="left:353.2px;top:396.6px;color:#1e1e1e">09:21</div>
<div class="t cell" style="left:386.2px;top:396.6px;color:#1e1e1e">2.0</div>
<div class="t cell" style="left:414.9px;top:396.6px;color:#1e1e1e">22.0</div>
<div class="t cell nt" style="left:449.2px;top:396.6px;color:#1e1e1e">apoyo,&nbsp; sin muros, fuerza, sin ve</div>
<div class="a" style="left:63.5px;top:428.3px;width:649px;height:0.8px;background:#e3e3e3"></div>
<div class="a" style="left:45.2px;top:428.2px;width:17px;height:0.9px;background:#cdcdcd"></div>
<div class="t" style="left:46.6px;top:416.04999999999995px;font-size:7.7px;-webkit-text-stroke:0.1px currentColor;color:#2a2a2a;font-weight:normal">16</div>
<div class="t cell" style="left:66.9px;top:415.65px;color:#2b8d19">16</div>
<div class="t cell" style="left:90.9px;top:415.65px;color:#2b8d19">MIB</div>
<div class="t cell" style="left:135.9px;top:415.65px;color:#2b8d19">ReboteH4</div>
<div class="t cell" style="left:213.9px;top:415.65px;color:#2b8d19">Long</div>
<div class="t cell" style="left:241.9px;top:415.65px;color:#2b8d19">0.5</div>
<div class="t cell" style="left:266.9px;top:415.65px;color:#2b8d19">2025-08-25</div>
<div class="t cell" style="left:321.9px;top:415.65px;color:#2b8d19">09:36</div>
<div class="t cell" style="left:353.2px;top:415.65px;color:#2b8d19">11:00</div>
<div class="t cell" style="left:386.2px;top:415.65px;color:#2b8d19">48.0</div>
<div class="t cell" style="left:414.9px;top:415.65px;color:#2b8d19">130.0</div>
<div class="t cell nt" style="left:449.2px;top:415.65px;color:#2b8d19">apoyo, VE, fuerza</div>
<div class="a" style="left:63.5px;top:447.3500000000001px;width:649px;height:0.8px;background:#e3e3e3"></div>
<div class="a" style="left:45.2px;top:447.25000000000006px;width:17px;height:0.9px;background:#cdcdcd"></div>
<div class="t" style="left:46.6px;top:435.1px;font-size:7.7px;-webkit-text-stroke:0.1px currentColor;color:#2a2a2a;font-weight:normal">17</div>
<div class="t cell" style="left:66.9px;top:434.70000000000005px;color:#1e1e1e">17</div>
<div class="t cell" style="left:90.9px;top:434.70000000000005px;color:#1e1e1e">EURGBP</div>
<div class="t cell" style="left:135.9px;top:434.70000000000005px;color:#1e1e1e">ReboteH4</div>
<div class="t cell" style="left:213.9px;top:434.70000000000005px;color:#1e1e1e">Long</div>
<div class="t cell" style="left:241.9px;top:434.70000000000005px;color:#1e1e1e">8.0</div>
<div class="t cell" style="left:266.9px;top:434.70000000000005px;color:#1e1e1e">2025-08-25</div>
<div class="t cell" style="left:321.9px;top:434.70000000000005px;color:#1e1e1e">08:33</div>
<div class="t cell" style="left:353.2px;top:434.70000000000005px;color:#1e1e1e">09:40</div>
<div class="t cell" style="left:386.2px;top:434.70000000000005px;color:#1e1e1e">8.0</div>
<div class="t cell" style="left:414.9px;top:434.70000000000005px;color:#1e1e1e">2.0</div>
<div class="t cell nt" style="left:449.2px;top:434.70000000000005px;color:#1e1e1e">apoyo, fuerza, sin ve</div>
<div class="a" style="left:63.5px;top:466.40000000000003px;width:649px;height:0.8px;background:#e3e3e3"></div>
<div class="a" style="left:45.2px;top:466.3px;width:17px;height:0.9px;background:#cdcdcd"></div>
<div class="t" style="left:46.6px;top:454.15px;font-size:7.7px;-webkit-text-stroke:0.1px currentColor;color:#2a2a2a;font-weight:normal">18</div>
<div class="t cell" style="left:66.9px;top:453.75px;color:#1e1e1e">18</div>
<div class="t cell" style="left:90.9px;top:453.75px;color:#1e1e1e">PLATA</div>
<div class="t cell" style="left:135.9px;top:453.75px;color:#1e1e1e">Volandas</div>
<div class="t cell" style="left:213.9px;top:453.75px;color:#1e1e1e">Long</div>
<div class="t cell" style="left:241.9px;top:453.75px;color:#1e1e1e">4.0</div>
<div class="t cell" style="left:266.9px;top:453.75px;color:#1e1e1e">2025-08-25</div>
<div class="t cell" style="left:321.9px;top:453.75px;color:#1e1e1e">08:04</div>
<div class="t cell" style="left:353.2px;top:453.75px;color:#1e1e1e">09:12</div>
<div class="t cell" style="left:386.2px;top:453.75px;color:#1e1e1e">-10.0</div>
<div class="t cell" style="left:414.9px;top:453.75px;color:#1e1e1e">-2.0</div>
<div class="t cell nt" style="left:449.2px;top:453.75px;color:#1e1e1e">sin apoyo 4H, entrada en 3ra vela</div>
<div class="a" style="left:63.5px;top:485.4500000000001px;width:649px;height:0.8px;background:#e3e3e3"></div>
<div class="a" style="left:45.2px;top:485.3500000000001px;width:17px;height:0.9px;background:#cdcdcd"></div>
<div class="t" style="left:46.6px;top:473.20000000000005px;font-size:7.7px;-webkit-text-stroke:0.1px currentColor;color:#2a2a2a;font-weight:normal">19</div>
<div class="t cell" style="left:66.9px;top:472.80000000000007px;color:#1e1e1e">19</div>
<div class="t cell" style="left:90.9px;top:472.80000000000007px;color:#1e1e1e">ORO</div>
<div class="t cell" style="left:135.9px;top:472.80000000000007px;color:#1e1e1e">Volandas</div>
<div class="t cell" style="left:213.9px;top:472.80000000000007px;color:#1e1e1e">Long</div>
<div class="t cell" style="left:241.9px;top:472.80000000000007px;color:#1e1e1e">10.0</div>
<div class="t cell" style="left:266.9px;top:472.80000000000007px;color:#1e1e1e">2025-08-25</div>
<div class="t cell" style="left:321.9px;top:472.80000000000007px;color:#1e1e1e">08:07</div>
<div class="t cell" style="left:353.2px;top:472.80000000000007px;color:#1e1e1e">09:14</div>
<div class="t cell" style="left:386.2px;top:472.80000000000007px;color:#1e1e1e">2.0</div>
<div class="t cell" style="left:414.9px;top:472.80000000000007px;color:#1e1e1e">0.0</div>
<div class="t cell nt" style="left:449.2px;top:472.80000000000007px;color:#1e1e1e">sin apoyo 4H, sin ve, sin muros y 1ra con fuerza</div>
<div class="a" style="left:63.5px;top:504.50000000000006px;width:649px;height:0.8px;background:#e3e3e3"></div>
<div class="a" style="left:45.2px;top:504.40000000000003px;width:17px;height:0.9px;background:#cdcdcd"></div>
<div class="t" style="left:46.6px;top:492.25px;font-size:7.7px;-webkit-text-stroke:0.1px currentColor;color:#2a2a2a;font-weight:normal">20</div>
<div class="t cell" style="left:66.9px;top:491.85px;color:#f01c1c">20</div>
<div class="t cell" style="left:90.9px;top:491.85px;color:#f01c1c">GBPUSD</div>
<div class="t cell" style="left:135.9px;top:491.85px;color:#f01c1c">Volandas</div>
<div class="t cell" style="left:213.9px;top:491.85px;color:#f01c1c">Long</div>
<div class="t cell" style="left:241.9px;top:491.85px;color:#f01c1c">4.0</div>
<div class="t cell" style="left:266.9px;top:491.85px;color:#f01c1c">2025-08-25</div>
<div class="t cell" style="left:321.9px;top:491.85px;color:#f01c1c">08:16</div>
<div class="t cell" style="left:353.2px;top:491.85px;color:#f01c1c">09:00</div>
<div class="t cell" style="left:386.2px;top:491.85px;color:#f01c1c">-50.0</div>
<div class="t cell" style="left:414.9px;top:491.85px;color:#f01c1c">-7.0</div>
<div class="t cell nt" style="left:449.2px;top:491.85px;color:#f01c1c">sin apoyo 4H, sin ve, 3ra vela</div>
<div class="a" style="left:63.5px;top:523.55px;width:649px;height:0.8px;background:#e3e3e3"></div>
<div class="a" style="left:45.2px;top:523.4499999999999px;width:17px;height:0.9px;background:#cdcdcd"></div>
<div class="t" style="left:46.6px;top:511.29999999999995px;font-size:7.7px;-webkit-text-stroke:0.1px currentColor;color:#2a2a2a;font-weight:normal">21</div>
<div class="t cell" style="left:66.9px;top:510.9px;color:#f01c1c">21</div>
<div class="t cell" style="left:90.9px;top:510.9px;color:#f01c1c">FTSE</div>
<div class="t cell" style="left:135.9px;top:510.9px;color:#f01c1c">ReboteH4</div>
<div class="t cell" style="left:213.9px;top:510.9px;color:#f01c1c">Long</div>
<div class="t cell" style="left:241.9px;top:510.9px;color:#f01c1c">8.0</div>
<div class="t cell" style="left:266.9px;top:510.9px;color:#f01c1c">2025-08-25</div>
<div class="t cell" style="left:321.9px;top:510.9px;color:#f01c1c">07:57</div>
<div class="t cell" style="left:353.2px;top:510.9px;color:#f01c1c">08:12</div>
<div class="t cell" style="left:386.2px;top:510.9px;color:#f01c1c">-80.0</div>
<div class="t cell" style="left:414.9px;top:510.9px;color:#f01c1c">-5.0</div>
<div class="t cell nt" style="left:449.2px;top:510.9px;color:#f01c1c">sin apoyo, sin VE, SL mal puesto, 2da vela</div>
<div class="a" style="left:35px;top:536px;width:686px;height:6px;background:#e2e2e2"></div>
<div class="a" style="left:722px;top:536px;width:267px;height:6px;background:#e2e2e2"></div>
<div class="tab" style="left:256.3px;top:536.7px;width:39.0px;background:linear-gradient(#4a9cf9,#1c74f0);color:#fff;border-radius:3px 0 0 3px">Trades</div>
<div class="tab" style="left:295.3px;top:536.7px;width:41.19999999999999px;border-left:0.5px solid #e4e4e4">Setups</div>
<div class="tab" style="left:336.5px;top:536.7px;width:49.10000000000002px;border-left:0.5px solid #e4e4e4">Features</div>
<div class="tab" style="left:385.6px;top:536.7px;width:60.799999999999955px;border-left:0.5px solid #e4e4e4">Instruments</div>
<div class="tab" style="left:446.4px;top:536.7px;width:54.700000000000045px;border-radius:0 3px 3px 0;border-left:0.5px solid #e4e4e4">Currencies</div>
<div class="tab" style="left:781.5px;top:536.7px;width:76.5px;background:linear-gradient(#4a9cf9,#1c74f0);color:#fff;border-radius:3px 0 0 3px">Trade 5 Features</div>
<div class="tab" style="left:858px;top:536.7px;width:71.20000000000005px;border-radius:0 3px 3px 0">Feature Setups</div>
<div class="a" style="left:730.2px;top:81.2px;width:251px;height:418.6px;background:#fff;border:0.8px solid #bdbdbd"></div>
<svg class="a" style="left:735.2px;top:83.9px" width="9" height="9" viewBox="0 0 9 9"><rect width="9" height="9" rx="2" fill="#2a7ff7"/><path d="M2.1 4.7 L3.8 6.5 L7 2.4" fill="none" stroke="#fff" stroke-width="1.1"/></svg>
<div class="t ft" style="left:752px;top:84.9px">1ra vela</div>
<svg class="a" style="left:735.2px;top:96.61000000000001px" width="9" height="9" viewBox="0 0 9 9"><rect width="9" height="9" rx="2" fill="#2a7ff7"/><path d="M2.1 4.7 L3.8 6.5 L7 2.4" fill="none" stroke="#fff" stroke-width="1.1"/></svg>
<div class="t ft" style="left:752px;top:97.61000000000001px">Apertura</div>
<div class="cb cb0" style="left:735.2px;top:109.32000000000001px"></div>
<div class="t ft" style="left:752px;top:110.32000000000001px">ApoyoD</div>
<div class="cb cb0" style="left:735.2px;top:122.03px"></div>
<div class="t ft" style="left:752px;top:123.03px">ApoyoH1</div>
<div class="cb cb0" style="left:735.2px;top:134.74px"></div>
<div class="t ft" style="left:752px;top:135.74px">ApoyoH4</div>
<div class="cb cb0" style="left:735.2px;top:147.45000000000002px"></div>
<div class="t ft" style="left:752px;top:148.45000000000002px">Corr</div>
<div class="cb cb0" style="left:735.2px;top:160.16000000000003px"></div>
<div class="t ft" style="left:752px;top:161.16000000000003px">Cruce GL</div>
<div class="cb cb0" style="left:735.2px;top:172.87px"></div>
<div class="t ft" style="left:752px;top:173.87px">CruceZCH4</div>
<svg class="a" style="left:735.2px;top:185.58px" width="9" height="9" viewBox="0 0 9 9"><rect width="9" height="9" rx="2" fill="#2a7ff7"/><path d="M2.1 4.7 L3.8 6.5 L7 2.4" fill="none" stroke="#fff" stroke-width="1.1"/></svg>
<div class="t ft" style="left:752px;top:186.58px">Desp.Corr.</div>
<div class="cb cb0" style="left:735.2px;top:198.29000000000002px"></div>
<div class="t ft" style="left:752px;top:199.29000000000002px">En Sesion</div>
<div class="cb cb0" style="left:735.2px;top:211.0px"></div>
<div class="t ft" style="left:752px;top:212.0px">Fuer.Horar.</div>
<div class="cb cb0" style="left:735.2px;top:223.71px"></div>
<div class="t ft" style="left:752px;top:224.71px">Plumas</div>
<div class="cb cb0" style="left:735.2px;top:236.42000000000002px"></div>
<div class="t ft" style="left:752px;top:237.42000000000002px">PreAper</div>
<svg class="a" style="left:735.2px;top:249.13000000000002px" width="9" height="9" viewBox="0 0 9 9"><rect width="9" height="9" rx="2" fill="#2a7ff7"/><path d="M2.1 4.7 L3.8 6.5 L7 2.4" fill="none" stroke="#fff" stroke-width="1.1"/></svg>
<div class="t ft" style="left:752px;top:250.13000000000002px">Pullback</div>
<div class="cb cb0" style="left:735.2px;top:261.84000000000003px"></div>
<div class="t ft" style="left:752px;top:262.84000000000003px">Qbre. No Conf.</div>
<div class="cb cb0" style="left:735.2px;top:274.55px"></div>
<div class="t ft" style="left:752px;top:275.55px">Reentrada</div>
<div class="cb cb0" style="left:735.2px;top:287.26px"></div>
<div class="t ft" style="left:752px;top:288.26px">Rept 4H</div>
<div class="cb cb0" style="left:735.2px;top:299.97px"></div>
<div class="t ft" style="left:752px;top:300.97px">scalpm1ok</div>
<svg class="a" style="left:735.2px;top:312.68000000000006px" width="9" height="9" viewBox="0 0 9 9"><rect width="9" height="9" rx="2" fill="#2a7ff7"/><path d="M2.1 4.7 L3.8 6.5 L7 2.4" fill="none" stroke="#fff" stroke-width="1.1"/></svg>
<div class="t ft" style="left:752px;top:313.68000000000006px">Sin Muros</div>
<svg class="a" style="left:735.2px;top:325.39px" width="9" height="9" viewBox="0 0 9 9"><rect width="9" height="9" rx="2" fill="#2a7ff7"/><path d="M2.1 4.7 L3.8 6.5 L7 2.4" fill="none" stroke="#fff" stroke-width="1.1"/></svg>
<div class="t ft" style="left:752px;top:326.39px">Tras Muro</div>
<div class="cb cb0" style="left:735.2px;top:338.1px"></div>
<div class="t ft" style="left:752px;top:339.1px">Val Estr</div>
<div class="cb cb0" style="left:735.2px;top:350.81000000000006px"></div>
<div class="t ft" style="left:752px;top:351.81000000000006px">VelaSemCorr</div>
<div class="cb cb0" style="left:735.2px;top:363.52px"></div>
<div class="t ft" style="left:752px;top:364.52px">Volandas</div>
<div class="cb cb0" style="left:735.2px;top:376.23px"></div>
<div class="t ft" style="left:752px;top:377.23px">volat</div>
<div class="cb cb0" style="left:735.2px;top:388.94000000000005px"></div>
<div class="t ft" style="left:752px;top:389.94000000000005px">Willy OK</div>
<div class="btn" style="left:731px;top:512px;width:37.7px;height:13px;line-height:13px">Clear</div>
</div></body></html>
